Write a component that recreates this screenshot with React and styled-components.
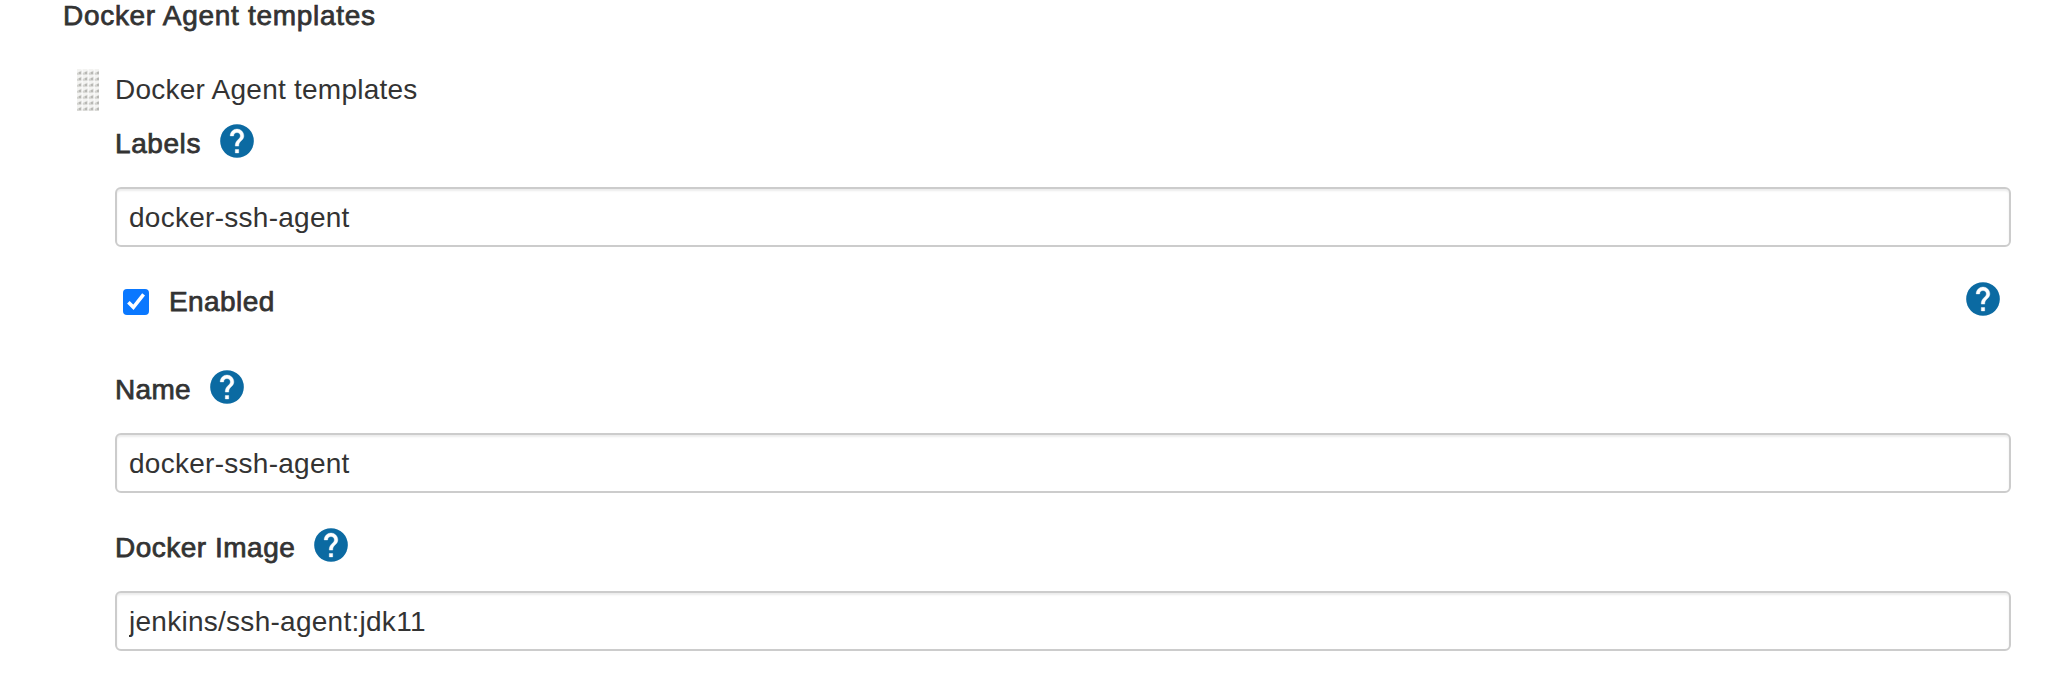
import React from 'react';
import styled, { createGlobalStyle } from 'styled-components';

const GlobalStyle = createGlobalStyle`
  * { box-sizing: border-box; }
  body {
    margin: 0;
    background: #fff;
    color: #333;
    font-family: "Helvetica Neue", "Liberation Sans", Arial, sans-serif;
    font-size: 28px;
    line-height: 40px;
  }
`;

const Page = styled.main`
  height: 677px;
  overflow: hidden;
  padding: 0 45px 0 63px;
`;

const Strong = styled.span`
  display: block;
  padding-top: 1px;
  -webkit-text-stroke: 0.75px #333;
  letter-spacing: ${(p) => p.$tracking || '0.5px'};
  white-space: nowrap;
`;

const SectionTitle = styled.div`
  height: 40px;
  margin-top: -5px;
`;

const Template = styled.section`
  display: flex;
  margin-top: 34px;
`;

const Handle = styled.div`
  flex: none;
  width: 22px;
  height: 42px;
  margin: 0 16px 0 14px;
`;

const Body = styled.div`
  flex: 1;
  min-width: 0;
`;

const TemplateName = styled.div`
  height: 54px;
  padding-top: 1px;
  letter-spacing: 0.24px;
`;

const Field = styled.div`
  margin-bottom: ${(p) => p.$gap || 0}px;
`;

const LabelRow = styled.div`
  display: flex;
  height: 64px;
  gap: 19px;
`;

const HelpIcon = styled.svg`
  display: block;
  flex: none;
  width: 34px;
  height: 34px;
  margin-top: 1px;
`;

const TextInput = styled.input`
  display: block;
  width: 100%;
  height: 60px;
  padding: 1px 12px 0;
  border: 2px solid #ccc;
  border-radius: 6px;
  box-shadow: inset 0 2px 2px rgba(0, 0, 0, 0.075);
  background: #fff;
  color: #333;
  font: inherit;
  letter-spacing: 0.27px;
  outline: none;
`;

const CheckRow = styled.div`
  display: flex;
  height: 88px;
  padding: 0 11px 0 8px;
`;

const CheckBox = styled.span`
  flex: none;
  width: 26px;
  height: 26px;
  margin: 8px 20px 0 0;
  border-radius: 4px;
  background: #0a78ff;
  svg { display: block; }
`;

const CheckHelp = styled.span`
  margin-left: auto;
`;

const Help = () => (
  <HelpIcon viewBox="2 2 20 20" aria-label="Help">
    <circle cx="12" cy="12" r="9.9" fill="#0b6aa2" />
    <path
      fill="#fff"
      stroke="#fff"
      strokeWidth="0.25"
      d="M13 19h-2v-2h2v2zm2.07-7.75l-.9.92C13.45 12.9 13 13.5 13 15h-2v-.5c0-1.1.45-2.1 1.17-2.83l1.24-1.26c.37-.36.59-.86.59-1.41 0-1.1-.9-2-2-2s-2 .9-2 2H8c0-2.21 1.79-4 4-4s4 1.79 4 4c0 .88-.36 1.68-.93 2.25z"
    />
  </HelpIcon>
);

const dots = [];
for (let row = 0; row < 7; row += 1) {
  for (let col = 0; col < 4; col += 1) dots.push([col * 6, row * 6]);
}

const DragHandle = () => (
  <Handle>
    <svg width="22" height="42" viewBox="0 0 22 42" display="block">
      {dots.map(([x, y]) => (
        <g key={`${x}-${y}`}>
          <rect x={x - 0.5} y={y} width="5" height="6" fill="#f3f3f1" />
          <path d={`M${x + 4.5} ${y + 1.5}v4.2h-4.7v-1.7z`} fill="#d2d2ce" />
          <rect x={x + 2} y={y + 3} width="2" height="2" fill="#b8b8b4" />
        </g>
      ))}
    </svg>
  </Handle>
);

const TextField = ({ label, value, gap, tracking }) => (
  <Field $gap={gap}>
    <LabelRow>
      <Strong $tracking={tracking}>{label}</Strong>
      <Help />
    </LabelRow>
    <TextInput defaultValue={value} aria-label={label} spellCheck={false} />
  </Field>
);

export default function App() {
  return (
    <>
      <GlobalStyle />
      <Page>
        <SectionTitle>
          <Strong $tracking="0.7px">Docker Agent templates</Strong>
        </SectionTitle>
        <Template>
          <DragHandle />
          <Body>
            <TemplateName>Docker Agent templates</TemplateName>
            <TextField label="Labels" value="docker-ssh-agent" gap={34} tracking="0.58px" />
            <CheckRow>
              <CheckBox role="checkbox" aria-checked="true">
                <svg width="26" height="26" viewBox="0 0 26 26" fill="none" stroke="#fff" strokeWidth="3.6">
                  <path d="M5.4 13.2l5 5.1L20.6 5.4" />
                </svg>
              </CheckBox>
              <Strong $tracking="0.42px">Enabled</Strong>
              <CheckHelp>
                <Help />
              </CheckHelp>
            </CheckRow>
            <TextField label="Name" value="docker-ssh-agent" gap={34} tracking="0.3px" />
            <TextField label="Docker Image" value="jenkins/ssh-agent:jdk11" />
          </Body>
        </Template>
      </Page>
    </>
  );
}
